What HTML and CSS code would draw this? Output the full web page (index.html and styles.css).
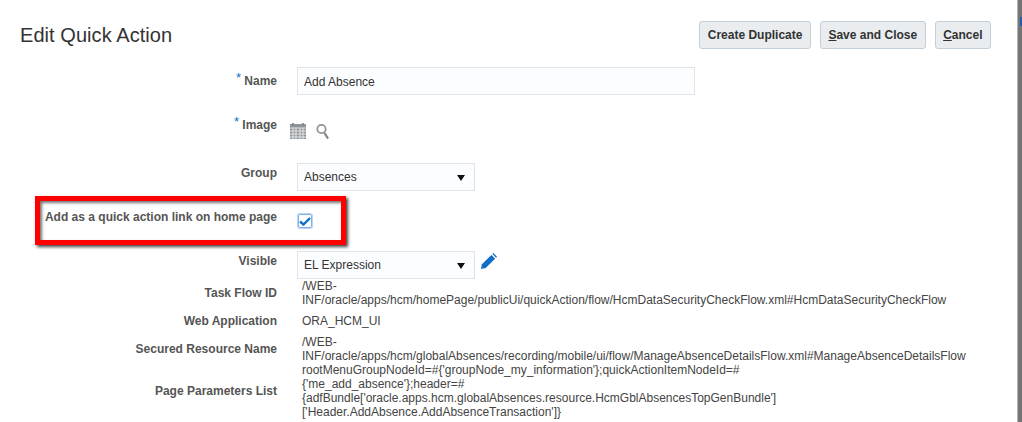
FILE: index.html
```html
<!DOCTYPE html>
<html lang="en">
  <head>
    <meta charset="UTF-8">
    <title>Edit Quick Action</title>
    <link rel="stylesheet" href="styles.css">
  </head>
  <body>
    <div class="page">
      <div class="page-header">
        <h1>Edit Quick Action</h1>
        <div class="actions">
          <button class="btn">Create Duplicate</button>
          <button class="btn"><u>S</u>ave and Close</button>
          <button class="btn"><u>C</u>ancel</button>
        </div>
      </div>

      <div class="form">
        <div class="row row-name">
          <label><span class="req">*</span> Name</label>
          <div class="field"><div class="input input-wide">Add Absence</div></div>
        </div>

        <div class="row row-image">
          <label><span class="req">*</span> Image</label>
          <div class="field icons">
            <svg width="16" height="16" viewBox="0 0 16 16">
              <rect x="0" y="1" width="16" height="15" fill="#8f9498"/>
              <path d="M0 5h16M0 8h16M0 11h16M0 14h16M3 5v11M6 5v11M10 5v11M13 5v11" stroke="#e4e6e8" stroke-width="1"/>
              <path d="M3 0v2M13 0v2" stroke="#777" stroke-width="1.5"/>
            </svg>
            <svg width="14" height="16" viewBox="0 0 14 16">
              <circle cx="5.5" cy="6" r="4.2" fill="none" stroke="#8f9498" stroke-width="1.8"/>
              <path d="M8.5 10l3.5 5.5" stroke="#7d8286" stroke-width="2.2"/>
            </svg>
          </div>
        </div>

        <div class="row row-group">
          <label>Group</label>
          <div class="field">
            <div class="input select">Absences<span class="caret"></span></div>
          </div>
        </div>

        <div class="row row-check">
          <label>Add as a quick action link on home page</label>
          <div class="field">
            <div class="checkbox">
              <svg width="12" height="9" viewBox="0 0 12 9">
                <path d="M1 4.5l3.5 3L11 1" fill="none" stroke="#0f6fc6" stroke-width="2.4"/>
              </svg>
            </div>
          </div>
          <div class="callout"></div>
        </div>

        <div class="row row-visible">
          <label>Visible</label>
          <div class="field field-inline">
            <div class="input select">EL Expression<span class="caret"></span></div>
            <svg class="pencil" width="16" height="16" viewBox="0 0 17 17">
              <path d="M0 17l1-5L11 2l4 4L5 16z" fill="#0f6fc6"/>
              <path d="M12 1l1-1 4 4-1 1z" fill="#0f6fc6"/>
            </svg>
          </div>
        </div>

        <div class="row row-text">
          <label>Task Flow ID</label>
          <div class="value">/WEB-INF/oracle/apps/hcm/homePage/publicUi/quickAction/flow/HcmDataSecurityCheckFlow.xml#HcmDataSecurityCheckFlow</div>
        </div>

        <div class="row row-text row-app">
          <label>Web Application</label>
          <div class="value">ORA_HCM_UI</div>
        </div>

        <div class="row row-text">
          <label>Secured Resource Name</label>
          <div class="value">/WEB-INF/oracle/apps/hcm/globalAbsences/recording/mobile/ui/flow/ManageAbsenceDetailsFlow.xml#ManageAbsenceDetailsFlow</div>
        </div>

        <div class="row row-text">
          <label>Page Parameters List</label>
          <div class="value">rootMenuGroupNodeId=#{'groupNode_my_information'};quickActionItemNodeId=#<br>{'me_add_absence'};header=#<br>{adfBundle['oracle.apps.hcm.globalAbsences.resource.HcmGblAbsencesTopGenBundle']<br>['Header.AddAbsence.AddAbsenceTransaction']}</div>
        </div>
      </div>
    </div>
    <div class="edge"><div class="edge-mark"></div></div>
  </body>
</html>
```

FILE: styles.css
```css
html, body {
  height: 100%;
}
body {
  margin: 0;
  display: flex;
  background-color: #fff;
  font-family: "Liberation Sans", Arial, sans-serif;
  font-size: 12px;
  color: #333;
  overflow: hidden;
}
.page {
  flex: 1;
  min-width: 0;
  padding: 21px 26px 0 20px;
}
.page-header {
  display: flex;
  justify-content: space-between;
  align-items: flex-start;
}
h1 {
  margin: 0;
  font-size: 20px;
  font-weight: normal;
  line-height: 28px;
  letter-spacing: 0.06px;
  color: #333;
}
.actions {
  display: flex;
  gap: 9px;
}
.btn {
  height: 28px;
  padding: 0 7.5px;
  border: 1px solid #c4ced7;
  border-radius: 3px;
  background-color: #e9edf0;
  font-family: inherit;
  font-size: 12px;
  font-weight: bold;
  color: #333;
}
.form {
  display: flex;
  flex-direction: column;
  margin-top: 18px;
}
.row {
  position: relative;
  display: flex;
  align-items: flex-start;
}
.row label {
  flex: 0 0 257px;
  text-align: right;
  font-weight: bold;
  color: #555;
  line-height: 16px;
}
.field {
  margin-left: 20px;
}
.field-inline {
  display: flex;
  gap: 6px;
}
.req {
  color: #0f6fc6;
  font-size: 13px;
  font-weight: normal;
  line-height: 12px;
  position: relative;
  top: -3px;
}
.input {
  height: 28px;
  box-sizing: border-box;
  padding: 0 6px;
  border: 1px solid #dfe4ea;
  background-color: #fcfdfe;
  line-height: 27px;
  color: #333;
}
.input-wide {
  width: 398px;
  line-height: 28px;
}
.select {
  position: relative;
  width: 178px;
}
.caret {
  position: absolute;
  right: 9px;
  top: 11px;
  border-left: 4.5px solid transparent;
  border-right: 4.5px solid transparent;
  border-top: 6px solid #111;
}
.icons {
  display: flex;
  gap: 10px;
  margin-left: 13px;
  padding-top: 10px;
}
.checkbox {
  width: 12px;
  height: 12px;
  margin: 9px 0 0 1px;
  border: 1px solid #7fb1ee;
  border-radius: 2px;
  box-shadow: 0 0 0 1px #b9d5f6;
  display: flex;
  align-items: center;
  justify-content: center;
}
.callout {
  position: absolute;
  left: 15px;
  top: -9px;
  box-sizing: border-box;
  width: 311px;
  height: 49px;
  border: 5px solid #f00;
  box-shadow: 2px 2px 3px #444, inset 2px 2px 3px rgba(0, 0, 0, 0.55);
}
.pencil {
  margin-top: 2px;
}
.value {
  margin-left: 25px;
  width: 665px;
  line-height: 14px;
  color: #444;
  overflow-wrap: anywhere;
}
.row-name label { padding-top: 6px; }
.row-image { margin-top: 18px; height: 50px; }
.row-image label { padding-top: 4px; }
.row-group label { padding-top: 2px; }
.row-check { margin-top: 14px; height: 46px; }
.row-check label { padding-top: 4px; }
.row-visible label { padding-top: 2px; }
.row-text { align-items: center; }
.row-app { margin: 6px 0; }
.edge {
  flex: 0 0 4px;
  background-color: #757575;
  border-left: 1px solid #b5b5b5;
}
.edge-mark {
  width: 2px;
  height: 9px;
  margin: 17px 0 0 2px;
  background-color: #1f5fa8;
}
```
